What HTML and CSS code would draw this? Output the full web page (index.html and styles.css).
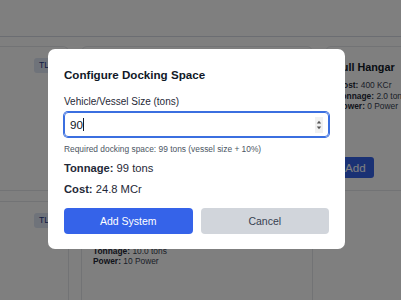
FILE: index.html
```html
<!DOCTYPE html>
<html>
<head>
<meta charset="utf-8">
<link rel="stylesheet" href="styles.css">
</head>
<body>
<header class="topbar"></header>
<main class="grid">
  <div class="card card-left">
    <div class="card-head"><span class="badge">TL 10</span></div>
  </div>
  <div class="card"></div>
  <div class="card">
    <div class="card-title">Hull Hangar</div>
    <div class="stats">
      <div><b>Cost:</b> 400 KCr</div>
      <div><b>Tonnage:</b> 2.0 tons</div>
      <div><b>Power:</b> 0 Power</div>
    </div>
    <button class="card-btn">Add</button>
  </div>
  <div class="card card-left">
    <div class="card-head"><span class="badge">TL 12</span></div>
  </div>
  <div class="card">
    <div class="card-title">Repair Drones</div>
    <div class="stats">
      <div><b>Cost:</b> 2 MCr</div>
      <div><b>Tonnage:</b> 10.0 tons</div>
      <div><b>Power:</b> 10 Power</div>
    </div>
    <button class="card-btn">Add</button>
  </div>
</main>
<div class="overlay">
  <div class="modal">
    <h2 class="modal-title">Configure Docking Space</h2>
    <label class="field-label" for="size">Vehicle/Vessel Size (tons)</label>
    <div class="input-wrap">
      <span class="input-value">90<span class="caret"></span></span>
      <span class="spinner">
        <svg width="6" height="12" viewBox="0 0 6 12"><path d="M0.8 4.6 L3 1.8 L5.2 4.6 Z" fill="#555"/><path d="M0.8 7.4 L3 10.2 L5.2 7.4 Z" fill="#555"/></svg>
      </span>
    </div>
    <p class="helper">Required docking space: 99 tons (vessel size + 10%)</p>
    <p class="summary"><b>Tonnage:</b> 99 tons</p>
    <p class="summary summary-cost"><b>Cost:</b> 24.8 MCr</p>
    <div class="actions">
      <button class="btn btn-primary">Add System</button>
      <button class="btn btn-secondary">Cancel</button>
    </div>
  </div>
</div>
</body>
</html>
```
FILE: styles.css
```css
* { box-sizing: border-box; }
html, body { margin: 0; padding: 0; }
body {
  width: 401px;
  height: 300px;
  overflow: hidden;
  background: #ffffff;
  font-family: "Liberation Sans", Arial, sans-serif;
  color: #111827;
}
.topbar {
  height: 37px;
  background: #ffffff;
  border-bottom: 1px solid #d6dbe4;
}
.grid {
  display: grid;
  grid-template-columns: 69px 232px 232px;
  grid-auto-rows: 145px;
  column-gap: 12px;
  row-gap: 10px;
  padding-top: 9px;
}
.card {
  background: #ffffff;
  border: 1px solid #e5e7eb;
  border-radius: 6px;
  padding: 11px;
  display: flex;
  flex-direction: column;
  white-space: nowrap;
}
.card-left {
  border-left: none;
  border-radius: 0 6px 6px 0;
}
.card-head {
  display: flex;
  margin-left: 23px;
}
.badge {
  background: #dfe6f5;
  color: #1e3a8a;
  font-size: 8.7px;
  line-height: 15px;
  padding: 0 5px;
  border-radius: 3px;
  white-space: nowrap;
}
.card-title {
  font-weight: bold;
  font-size: 10.8px;
  line-height: 16px;
  margin-top: 1px;
  margin-left: -3px;
}
.stats {
  margin-top: 5px;
  font-size: 8.4px;
  line-height: 10.6px;
  color: #374151;
}
.stats b { color: #1f2937; }
.card-btn {
  margin-top: auto;
  margin-bottom: 1px;
  align-self: flex-start;
  background: #3563e9;
  color: #ffffff;
  border: none;
  border-radius: 3px;
  font-family: inherit;
  font-size: 11.6px;
  height: 21px;
  padding: 0 8px;
}
.overlay {
  position: fixed;
  inset: 0;
  background: rgba(0, 0, 0, 0.5);
  display: flex;
  align-items: center;
  justify-content: center;
  padding-right: 8px;
  padding-bottom: 2px;
}
.modal {
  width: 297px;
  background: #ffffff;
  border-radius: 7px;
  padding: 18px 16px 15px 16px;
  display: flex;
  flex-direction: column;
}
.modal-title {
  margin: 0;
  font-size: 11.6px;
  line-height: 16px;
  font-weight: bold;
  color: #111827;
}
.field-label {
  margin-top: 12px;
  font-size: 10px;
  line-height: 14px;
  color: #1f2937;
}
.input-wrap {
  margin-top: 3px;
  height: 25px;
  border: 1px solid #3b6fe0;
  box-shadow: 0 0 0 1px #3b6fe0;
  border-radius: 4px;
  display: flex;
  align-items: center;
  justify-content: space-between;
  padding: 0 5px 0 5px;
}
.input-value {
  font-size: 11.6px;
  color: #111827;
  display: flex;
  align-items: center;
}
.caret {
  display: inline-block;
  width: 1px;
  height: 13px;
  background: #111827;
  margin-left: 0.5px;
}
.spinner {
  display: flex;
  align-items: center;
  justify-content: center;
  width: 8px;
  height: 16px;
  background: #f1f1f1;
}
.helper {
  margin: 6px 0 0 0;
  font-size: 8.4px;
  line-height: 12px;
  color: #4b5563;
}
.summary {
  margin: 6px 0 0 0;
  font-size: 11.2px;
  line-height: 14px;
  color: #1f2937;
}
.summary-cost { margin-top: 7px; }
.actions {
  margin-top: 12px;
  display: flex;
  gap: 8px;
}
.btn {
  flex: 1;
  height: 26px;
  border: none;
  border-radius: 4px;
  font-family: inherit;
  font-size: 10.5px;
}
.btn-primary { background: #3563e9; color: #ffffff; }
.btn-secondary { background: #d1d5db; color: #374151; }
```
